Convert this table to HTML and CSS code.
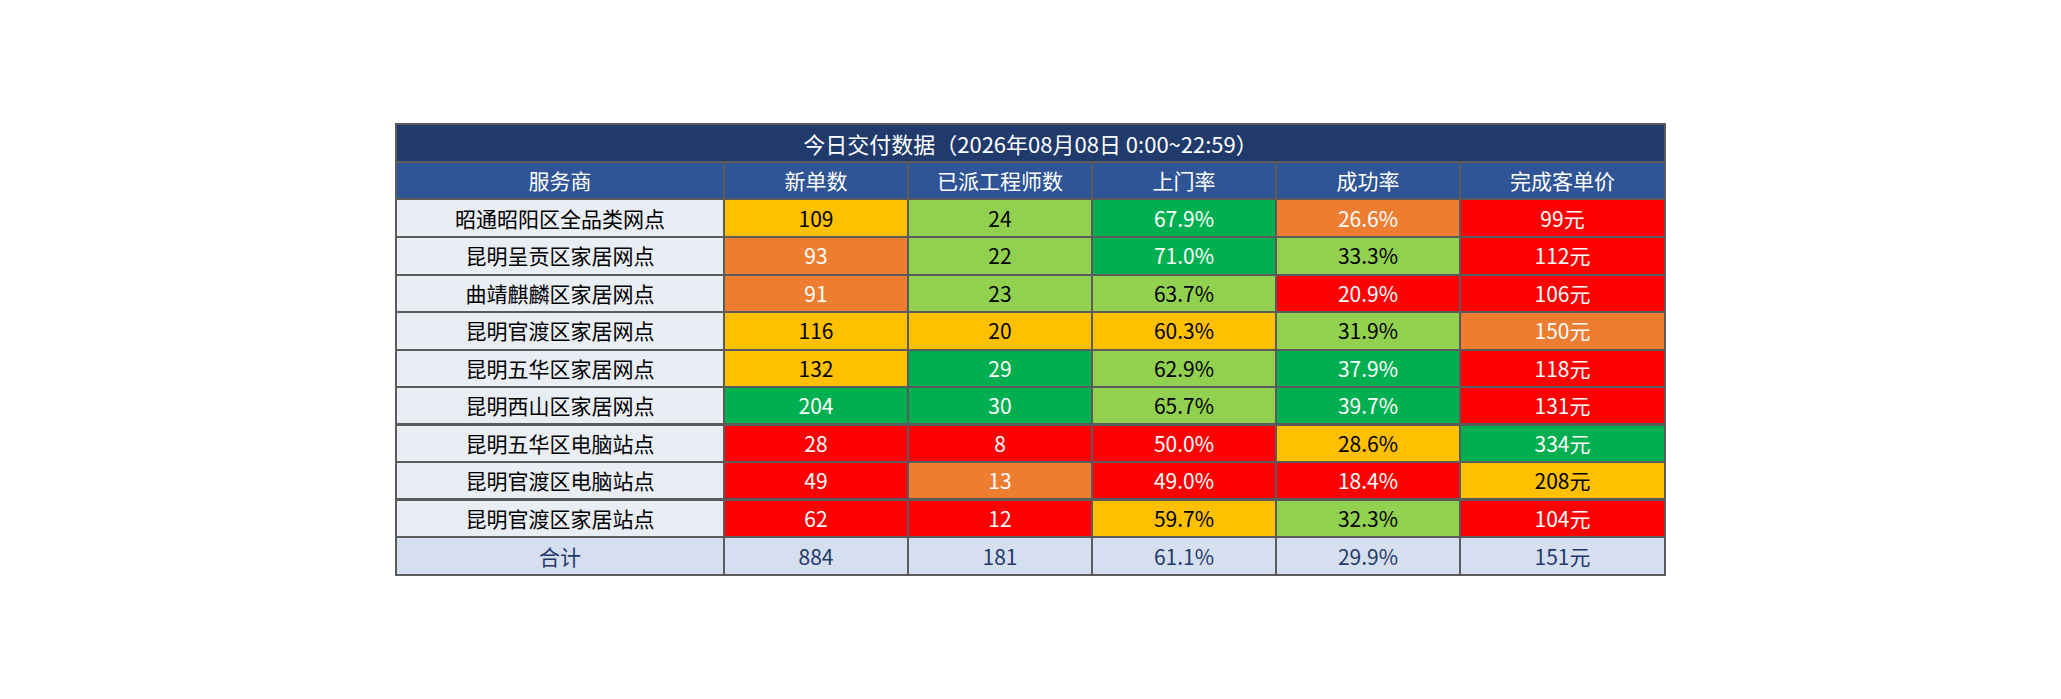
FILE: index.html
```html
<!DOCTYPE html>
<html lang="zh-CN">
<head>
<meta charset="utf-8">
<title>今日交付数据</title>
<link rel="stylesheet" href="styles.css">
</head>
<body>
<main class="page">
  <table class="report">
    <colgroup>
      <col class="c-name"><col class="c-num"><col class="c-num"><col class="c-num"><col class="c-num"><col class="c-last">
    </colgroup>
    <thead>
      <tr class="title-row"><th colspan="6">今日交付数据（2026年08月08日 0:00~22:59）</th></tr>
      <tr class="head-row"><th>服务商</th><th>新单数</th><th>已派工程师数</th><th>上门率</th><th>成功率</th><th>完成客单价</th></tr>
    </thead>
    <tbody>
      <tr class="row-a"><td class="name">昭通昭阳区全品类网点</td><td class="yellow">109</td><td class="lgreen">24</td><td class="green">67.9%</td><td class="orange">26.6%</td><td class="red">99元</td></tr>
      <tr class="row-b"><td class="name">昆明呈贡区家居网点</td><td class="orange">93</td><td class="lgreen">22</td><td class="green">71.0%</td><td class="lgreen">33.3%</td><td class="red">112元</td></tr>
      <tr class="row-b"><td class="name">曲靖麒麟区家居网点</td><td class="orange">91</td><td class="lgreen">23</td><td class="lgreen">63.7%</td><td class="red">20.9%</td><td class="red">106元</td></tr>
      <tr class="row-b"><td class="name">昆明官渡区家居网点</td><td class="yellow">116</td><td class="yellow">20</td><td class="yellow">60.3%</td><td class="lgreen">31.9%</td><td class="orange">150元</td></tr>
      <tr class="row-b"><td class="name">昆明五华区家居网点</td><td class="yellow">132</td><td class="green">29</td><td class="lgreen">62.9%</td><td class="green">37.9%</td><td class="red">118元</td></tr>
      <tr class="row-b thick"><td class="name">昆明西山区家居网点</td><td class="green">204</td><td class="green">30</td><td class="lgreen">65.7%</td><td class="green">39.7%</td><td class="red">131元</td></tr>
      <tr class="row-b"><td class="name">昆明五华区电脑站点</td><td class="red">28</td><td class="red">8</td><td class="red">50.0%</td><td class="yellow">28.6%</td><td class="green">334元</td></tr>
      <tr class="row-b thick"><td class="name">昆明官渡区电脑站点</td><td class="red">49</td><td class="orange">13</td><td class="red">49.0%</td><td class="red">18.4%</td><td class="yellow">208元</td></tr>
      <tr class="row-b"><td class="name">昆明官渡区家居站点</td><td class="red">62</td><td class="red">12</td><td class="yellow">59.7%</td><td class="lgreen">32.3%</td><td class="red">104元</td></tr>
      <tr class="row-a total"><td>合计</td><td>884</td><td>181</td><td>61.1%</td><td>29.9%</td><td>151元</td></tr>
    </tbody>
  </table>
</main>
</body>
</html>
```

FILE: styles.css
```css
html, body {
  margin: 0;
  padding: 0;
  background: #ffffff;
}

.page {
  width: 100%;
  height: 100vh;
  display: flex;
  align-items: center;
  justify-content: center;
}

.report {
  border-collapse: separate;
  border-spacing: 0;
  table-layout: fixed;
  width: 1271px;
  border-top: 2px solid #5b5b5b;
  border-left: 2px solid #5b5b5b;
  font-family: "Noto Sans CJK SC", "Noto Sans", sans-serif;
  font-size: 21px;
  color: #000000;
}

.c-name { width: 328px; }
.c-num { width: 184px; }
.c-last { width: 205px; }

.report th,
.report td {
  padding: 0;
  text-align: center;
  vertical-align: middle;
  font-weight: normal;
  line-height: 1;
  border-right: 2px solid #5b5b5b;
  border-bottom: 2px solid #5b5b5b;
  white-space: nowrap;
}

.title-row { height: 38px; }
.title-row th {
  background: #1f3a6b;
  color: #ffffff;
  font-size: 22px;
}

.head-row { height: 37px; }
.head-row th {
  background: #2f5597;
  color: #ffffff;
}

.row-a { height: 38px; }
.row-b { height: 37.5px; }

.row-b.thick td { border-bottom-width: 3px; }

.name { background: #e9edf4; }

.yellow { background: #ffc000; color: #000000; }
.lgreen { background: #92d050; color: #000000; }
.green  { background: #00b050; color: #ffffff; }
.orange { background: #ed7d31; color: #ffffff; }
.red    { background: #ff0000; color: #ffffff; }

.total td {
  background: #d6dfef;
  color: #1f3a6b;
}
```
